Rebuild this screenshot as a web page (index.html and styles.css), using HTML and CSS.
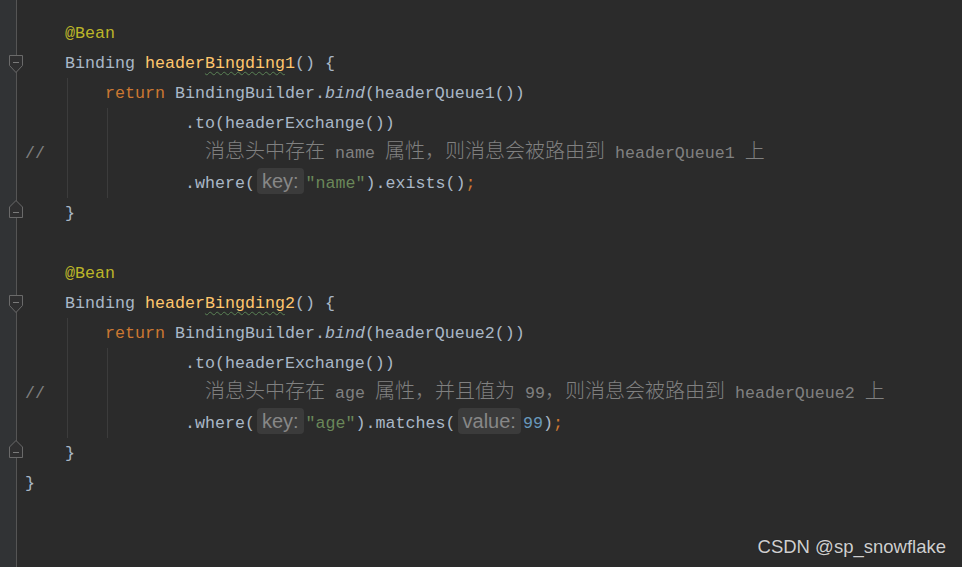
FILE: index.html
```html
<!DOCTYPE html>
<html lang="zh">
<head>
<meta charset="utf-8">
<title>Binding config</title>
<link rel="stylesheet" href="styles.css">
</head>
<body>
<div class="editor">
  <div class="gutter">
    <div class="gc"></div>
    <div class="gc"><svg class="fold" width="16" height="19" viewBox="0 0 16 19"><path d="M1.5 0.5H14.5V10.5L8 17.5L1.5 10.5Z" fill="#2f2f30" stroke="#6a6a6a"/><path d="M5 7.5H11" stroke="#7a7a7a"/></svg></div>
    <div class="gc"></div>
    <div class="gc"></div>
    <div class="gc"></div>
    <div class="gc"></div>
    <div class="gc"><svg class="fold up" width="16" height="19" viewBox="0 0 16 19"><path d="M8 0.5L14.5 7V17.5H1.5V7Z" fill="#2f2f30" stroke="#6a6a6a"/><path d="M5 12.5H11" stroke="#7a7a7a"/></svg></div>
    <div class="gc"></div>
    <div class="gc"></div>
    <div class="gc"><svg class="fold" width="16" height="19" viewBox="0 0 16 19"><path d="M1.5 0.5H14.5V10.5L8 17.5L1.5 10.5Z" fill="#2f2f30" stroke="#6a6a6a"/><path d="M5 7.5H11" stroke="#7a7a7a"/></svg></div>
    <div class="gc"></div>
    <div class="gc"></div>
    <div class="gc"></div>
    <div class="gc"></div>
    <div class="gc"><svg class="fold up" width="16" height="19" viewBox="0 0 16 19"><path d="M8 0.5L14.5 7V17.5H1.5V7Z" fill="#2f2f30" stroke="#6a6a6a"/><path d="M5 12.5H11" stroke="#7a7a7a"/></svg></div>
    <div class="gc"></div>
  </div>
  <div class="code">
    <div class="ln">    <span class="ann">@Bean</span></div>
    <div class="ln">    Binding <span class="fn">header<span class="typo">Bingding</span>1</span>() {</div>
    <div class="ln g1">        <span class="kw">return</span> BindingBuilder.<i>bind</i>(headerQueue1())</div>
    <div class="ln g2">                .to(headerExchange())</div>
    <div class="ln g2 cmt">//                <span class="cj">消息头中存在</span> name <span class="cj">属性，则消息会被路由到</span> headerQueue1 <span class="cj">上</span></div>
    <div class="ln g2">                .where(<span class="hint">key:</span><span class="str">"name"</span>).exists()<span class="kw">;</span></div>
    <div class="ln">    }</div>
    <div class="ln"> </div>
    <div class="ln">    <span class="ann">@Bean</span></div>
    <div class="ln">    Binding <span class="fn">header<span class="typo">Bingding</span>2</span>() {</div>
    <div class="ln g1">        <span class="kw">return</span> BindingBuilder.<i>bind</i>(headerQueue2())</div>
    <div class="ln g2">                .to(headerExchange())</div>
    <div class="ln g2 cmt">//                <span class="cj">消息头中存在</span> age <span class="cj">属性，并且值为</span> 99<span class="cj">，则消息会被路由到</span> headerQueue2 <span class="cj">上</span></div>
    <div class="ln g2">                .where(<span class="hint">key:</span><span class="str">"age"</span>).matches(<span class="hint">value:</span><span class="num">99</span>)<span class="kw">;</span></div>
    <div class="ln">    }</div>
    <div class="ln">}</div>
  </div>
</div>
<div class="watermark">CSDN @sp_snowflake</div>
</body>
</html>
```

FILE: styles.css
```css
html, body {
  margin: 0;
  padding: 0;
  background: #2b2b2b;
}

.editor {
  display: flex;
  min-height: 100vh;
  background: #2b2b2b;
}

.gutter {
  width: 16px;
  flex: none;
  background: #313335;
  border-right: 1px solid #555555;
  padding-top: 18px;
  display: flex;
  flex-direction: column;
}

.gc {
  height: 30px;
  overflow: visible;
}

.fold {
  display: block;
  margin-left: 8px;
  margin-top: 7px;
  overflow: visible;
}

.fold.up {
  margin-top: 2px;
}

.code {
  flex: 1;
  padding-top: 18px;
  padding-left: 8px;
  font-family: "Liberation Mono", "DejaVu Sans Mono", monospace;
  font-size: 16.6667px;
  color: #a9b7c6;
}

.ln {
  height: 30px;
  box-sizing: border-box;
  padding-top: 2px;
  line-height: 28px;
  white-space: pre;
}

.g1 {
  background: linear-gradient(#3c3c3c, #3c3c3c) no-repeat 42px 0 / 1px 100%;
}

.g2 {
  background:
    linear-gradient(#3c3c3c, #3c3c3c) no-repeat 42px 0 / 1px 100%,
    linear-gradient(#3c3c3c, #3c3c3c) no-repeat 82px 0 / 1px 100%;
}

.kw { color: #cc7832; }
.ann { color: #bbb529; }
.fn { color: #ffc66d; }
.str { color: #6a8759; }
.num { color: #6897bb; }
.cmt { color: #808080; }
i { font-style: italic; }

.typo {
  text-decoration: underline wavy #5a8255;
  text-decoration-thickness: 1px;
  text-underline-offset: 3px;
}

.cj {
  font-family: "Noto Sans CJK SC", sans-serif;
  font-size: 20px;
  font-weight: 300;
  line-height: 1;
}

.hint {
  display: inline-block;
  font-family: "Liberation Sans", Arial, sans-serif;
  font-size: 20px;
  color: #878787;
  background: #3b3b3b;
  border-radius: 4px;
  padding: 0 5px;
  margin: -3px 2px 0;
  height: 26px;
  line-height: 26px;
  vertical-align: baseline;
}

.watermark {
  position: absolute;
  right: 16px;
  bottom: 9px;
  font-family: "Liberation Sans", Arial, sans-serif;
  font-size: 18.5px;
  color: #cfcfcf;
  text-shadow: 0 0 1px #1e1e1e;
}
```
